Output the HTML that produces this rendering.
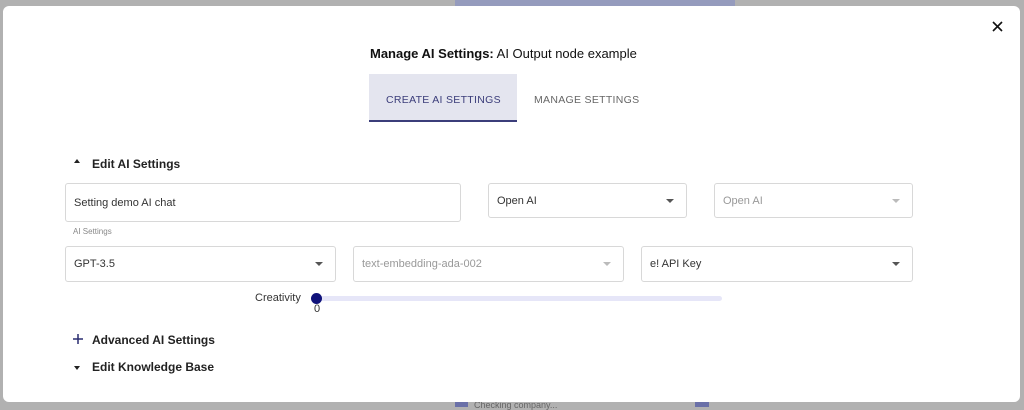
<!DOCTYPE html>
<html><head><style>
*{box-sizing:border-box;margin:0;padding:0}
body{width:1024px;height:407px;background:#b1b1b1;position:relative;overflow:hidden;font-family:"Liberation Sans",sans-serif;color:#222}
.a{position:absolute}
.modal{left:3px;top:6px;width:1017px;height:396px;background:#fff;border-radius:6px}
.box{position:absolute;border:1px solid #d8d8d8;border-radius:3px;background:#fff;font-size:11px;color:#333;padding-left:8px;display:flex;align-items:center}
.arr{position:absolute;right:12px;top:50%;margin-top:-2px;width:0;height:0;border-left:4px solid transparent;border-right:4px solid transparent;border-top:4px solid #555}
.dim{color:#999}.dim .arr{border-top-color:#bbb}
.h{font-size:12px;font-weight:bold;color:#222}
</style></head><body>
<div class="a" style="left:455px;top:0;width:280px;height:6px;background:#959bbd"></div>
<div class="a" style="left:455px;top:402px;width:13px;height:5px;background:#6a70a8"></div>
<div class="a" style="left:695px;top:402px;width:14px;height:5px;background:#6a70a8"></div>
<div class="a" style="left:474px;top:400px;font-size:9px;color:#666">Checking company...</div>
<div class="a modal"></div>
<svg class="a" style="left:992px;top:21px" width="11" height="11" viewBox="0 0 11 11"><path d="M1 1L10 10M10 1L1 10" stroke="#111" stroke-width="1.6"/></svg>
<div class="a" style="left:370px;top:46px;font-size:13px;color:#111"><b>Manage AI Settings:</b> AI Output node example</div>
<div class="a" style="left:369px;top:74px;width:148px;height:48px;background:#e4e5ef;border-bottom:2px solid #3b3d7a"></div>
<div class="a" style="left:386px;top:94px;font-size:10.5px;color:#3b3d7a;letter-spacing:.3px">CREATE AI SETTINGS</div>
<div class="a" style="left:534px;top:94px;font-size:10.5px;color:#666;letter-spacing:.3px">MANAGE SETTINGS</div>
<div class="a" style="left:74px;top:159px;width:0;height:0;border-left:3.5px solid transparent;border-right:3.5px solid transparent;border-bottom:4px solid #222"></div>
<div class="a h" style="left:92px;top:157px">Edit AI Settings</div>
<div class="box" style="left:65px;top:183px;width:396px;height:39px">Setting demo AI chat</div>
<div class="a" style="left:73px;top:227px;font-size:8px;color:#888">AI Settings</div>
<div class="box" style="left:488px;top:183px;width:199px;height:35px">Open AI<span class="arr"></span></div>
<div class="box dim" style="left:714px;top:183px;width:199px;height:35px">Open AI<span class="arr"></span></div>
<div class="box" style="left:65px;top:246px;width:271px;height:36px">GPT-3.5<span class="arr"></span></div>
<div class="box dim" style="left:353px;top:246px;width:271px;height:36px">text-embedding-ada-002<span class="arr"></span></div>
<div class="box" style="left:641px;top:246px;width:272px;height:36px">e! API Key<span class="arr"></span></div>
<div class="a" style="left:255px;top:292px;font-size:11px;color:#333">Creativity</div>
<div class="a" style="left:316px;top:296px;width:406px;height:5px;background:#e6e6f8;border-radius:3px"></div>
<div class="a" style="left:311px;top:293px;width:11px;height:11px;border-radius:50%;background:#10127a"></div>
<div class="a" style="left:314px;top:303px;font-size:11px;color:#333">0</div>
<svg class="a" style="left:73px;top:334px" width="10" height="10" viewBox="0 0 10 10"><path d="M5 0V10M0 5H10" stroke="#2a2d70" stroke-width="1.5"/></svg>
<div class="a h" style="left:92px;top:333px">Advanced AI Settings</div>
<div class="a" style="left:74px;top:366px;width:0;height:0;border-left:3.5px solid transparent;border-right:3.5px solid transparent;border-top:4px solid #222"></div>
<div class="a h" style="left:92px;top:360px">Edit Knowledge Base</div>
</body></html>
